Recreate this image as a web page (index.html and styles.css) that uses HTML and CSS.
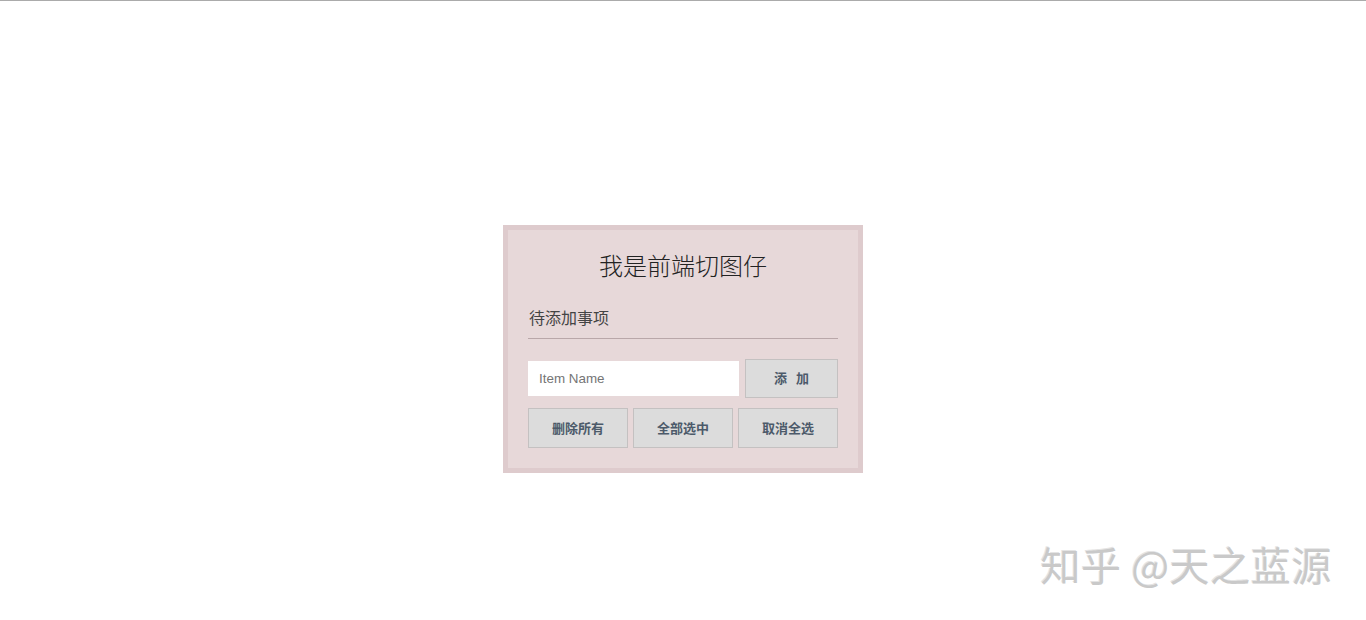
FILE: index.html
```html
<!DOCTYPE html>
<html lang="zh">
<head>
<meta charset="utf-8">
<title>我是前端切图仔</title>
<link rel="stylesheet" href="styles.css">
</head>
<body>
<div class="page">
  <div class="card">
    <h1 class="title">我是前端切图仔</h1>
    <h2 class="subtitle">待添加事项</h2>
    <div class="add-row">
      <input class="item-input" type="text" placeholder="Item Name">
      <button class="btn btn-add">添&nbsp;&nbsp;&nbsp;加</button>
    </div>
    <div class="action-row">
      <button class="btn btn-action">删除所有</button>
      <button class="btn btn-action">全部选中</button>
      <button class="btn btn-action">取消全选</button>
    </div>
  </div>
</div>
<div class="watermark">知乎 @天之蓝源</div>
</body>
</html>
```
FILE: styles.css
```css
html, body {
  margin: 0;
  padding: 0;
  background: #ffffff;
}
body {
  border-top: 1px solid #ababab;
  font-family: "Noto Sans CJK SC", "Liberation Sans", sans-serif;
  height: 619px;
  overflow: hidden;
}
.page {
  display: flex;
  justify-content: center;
  padding-top: 224px;
}
.card {
  width: 310px;
  padding: 20px;
  background: #e7d8d9;
  border: 5px solid #decbcd;
  display: flex;
  flex-direction: column;
}
.title {
  margin: 0;
  font-size: 24px;
  line-height: 30px;
  font-weight: 300;
  color: #222222;
  text-align: center;
}
.subtitle {
  margin: 25px 0 0;
  font-size: 16px;
  line-height: 24px;
  font-weight: 400;
  color: #444444;
  padding: 0 0 9px 1px;
  border-bottom: 1px solid #b9a7a9;
}
.add-row {
  display: flex;
  align-items: center;
  gap: 6px;
  margin-top: 20px;
}
.item-input {
  box-sizing: border-box;
  width: 211px;
  height: 35px;
  border: none;
  outline: none;
  padding: 0 11px;
  background: #ffffff;
  font-family: "Liberation Sans", Arial, sans-serif;
  font-size: 13.4px;
  color: #333;
}
.item-input::placeholder {
  color: #757575;
}
.btn {
  box-sizing: border-box;
  background: #dcdcdc;
  border: 1px solid #c4c1c1;
  color: #4c5a6a;
  font-family: "Noto Sans CJK SC", sans-serif;
  font-weight: 700;
  font-size: 13px;
  padding: 0 0 2px;
  cursor: pointer;
}
.btn-add {
  width: 93px;
  height: 39px;
}
.action-row {
  display: flex;
  gap: 5px;
  margin-top: 10px;
}
.btn-action {
  width: 100px;
  height: 40px;
}
.watermark {
  position: absolute;
  right: 34px;
  top: 536px;
  font-family: "Noto Sans CJK SC", sans-serif;
  font-size: 40px;
  letter-spacing: 0.6px;
  line-height: 56px;
  color: #c9c9c9;
  text-shadow: 1px 1px 0 #ffffff, -1px -1px 0 #e4e4e4;
  white-space: nowrap;
}
```
